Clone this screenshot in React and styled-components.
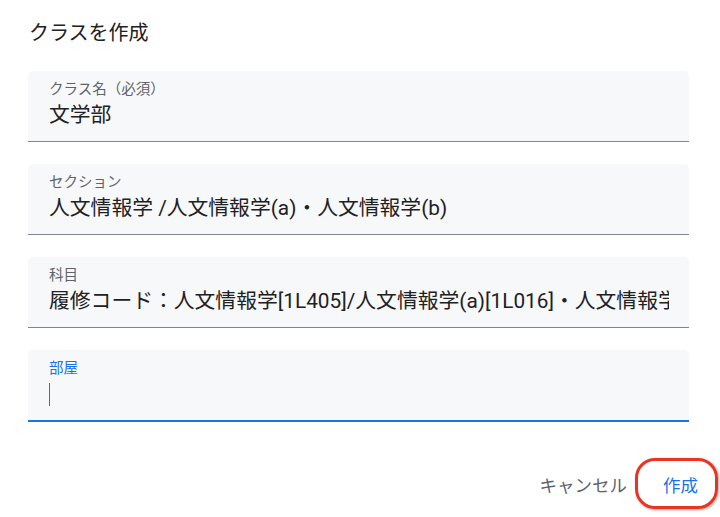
import React from "react";
import styled, { createGlobalStyle } from "styled-components";

const Global = createGlobalStyle`
  html, body { margin: 0; padding: 0; background: #ffffff; }
  body { font-family: Roboto, "Noto Sans CJK JP", sans-serif; color: #202124; }
`;

const Dialog = styled.div`
  width: 720px;
  height: 517px;
  box-sizing: border-box;
  padding: 21px 31px 0 28px;
  display: flex;
  flex-direction: column;
  position: relative;
  overflow: hidden;
`;

const Title = styled.h2`
  margin: 0 0 26px 1px;
  font-size: 20px;
  line-height: 24px;
  font-weight: 400;
  color: #202124;
`;

const Fields = styled.div`
  display: flex;
  flex-direction: column;
  gap: 22px;
`;

const Field = styled.div`
  height: 70px;
  box-sizing: content-box;
  background: #f7f8f9;
  border-radius: 5px 5px 0 0;
  border-bottom: ${(p) => (p.$focused ? "2px solid #1a73e8" : "1px solid #80868b")};
  padding: 0 20px 0 21px;
  display: flex;
  flex-direction: column;
  overflow: hidden;
`;

const Label = styled.div`
  margin-top: 10px;
  font-size: 14.5px;
  line-height: 18px;
  color: ${(p) => (p.$focused ? "#1a73e8" : "#5f6368")};
  white-space: nowrap;
`;

const Value = styled.div`
  margin-top: 3px;
  font-size: 20.8px;
  line-height: 26px;
  height: 26px;
  color: #202124;
  white-space: nowrap;
  overflow: hidden;
  display: flex;
  align-items: center;
`;

const Caret = styled.span`
  display: inline-block;
  flex: none;
  width: 1px;
  height: 23px;
  background: #1a73e8;
`;

const Footer = styled.div`
  margin-top: 46px;
  display: flex;
  justify-content: flex-end;
  gap: 20px;
  margin-right: -17px;
`;

const Button = styled.button`
  position: relative;
  border: none;
  background: transparent;
  font-family: Roboto, "Noto Sans CJK JP", sans-serif;
  font-size: 17.5px;
  line-height: 36px;
  height: 36px;
  padding: 0 8px;
  color: ${(p) => (p.$primary ? "#1a73e8" : "#5f6368")};
  cursor: pointer;
`;

const Highlight = styled.span`
  position: absolute;
  left: -20px;
  right: -12px;
  top: -10px;
  bottom: -5px;
  border: 3px solid #ea3323;
  border-radius: 20px;
  box-shadow: 1px 1px 3px rgba(0, 0, 0, 0.35);
  pointer-events: none;
`;

const fields = [
  { label: "クラス名（必須）", value: "文学部" },
  { label: "セクション", value: "人文情報学 /人文情報学(a)・人文情報学(b)" },
  {
    label: "科目",
    value: "履修コード：人文情報学[1L405]/人文情報学(a)[1L016]・人文情報学(b)[1L017]",
  },
  { label: "部屋", value: "", focused: true },
];

export default function App() {
  return (
    <>
      <Global />
      <Dialog>
        <Title>クラスを作成</Title>
        <Fields>
          {fields.map((f) => (
            <Field key={f.label} $focused={f.focused}>
              <Label $focused={f.focused}>{f.label}</Label>
              <Value>{f.focused ? <Caret /> : f.value}</Value>
            </Field>
          ))}
        </Fields>
        <Footer>
          <Button>キャンセル</Button>
          <Button $primary>
            作成
            <Highlight />
          </Button>
        </Footer>
      </Dialog>
    </>
  );
}
